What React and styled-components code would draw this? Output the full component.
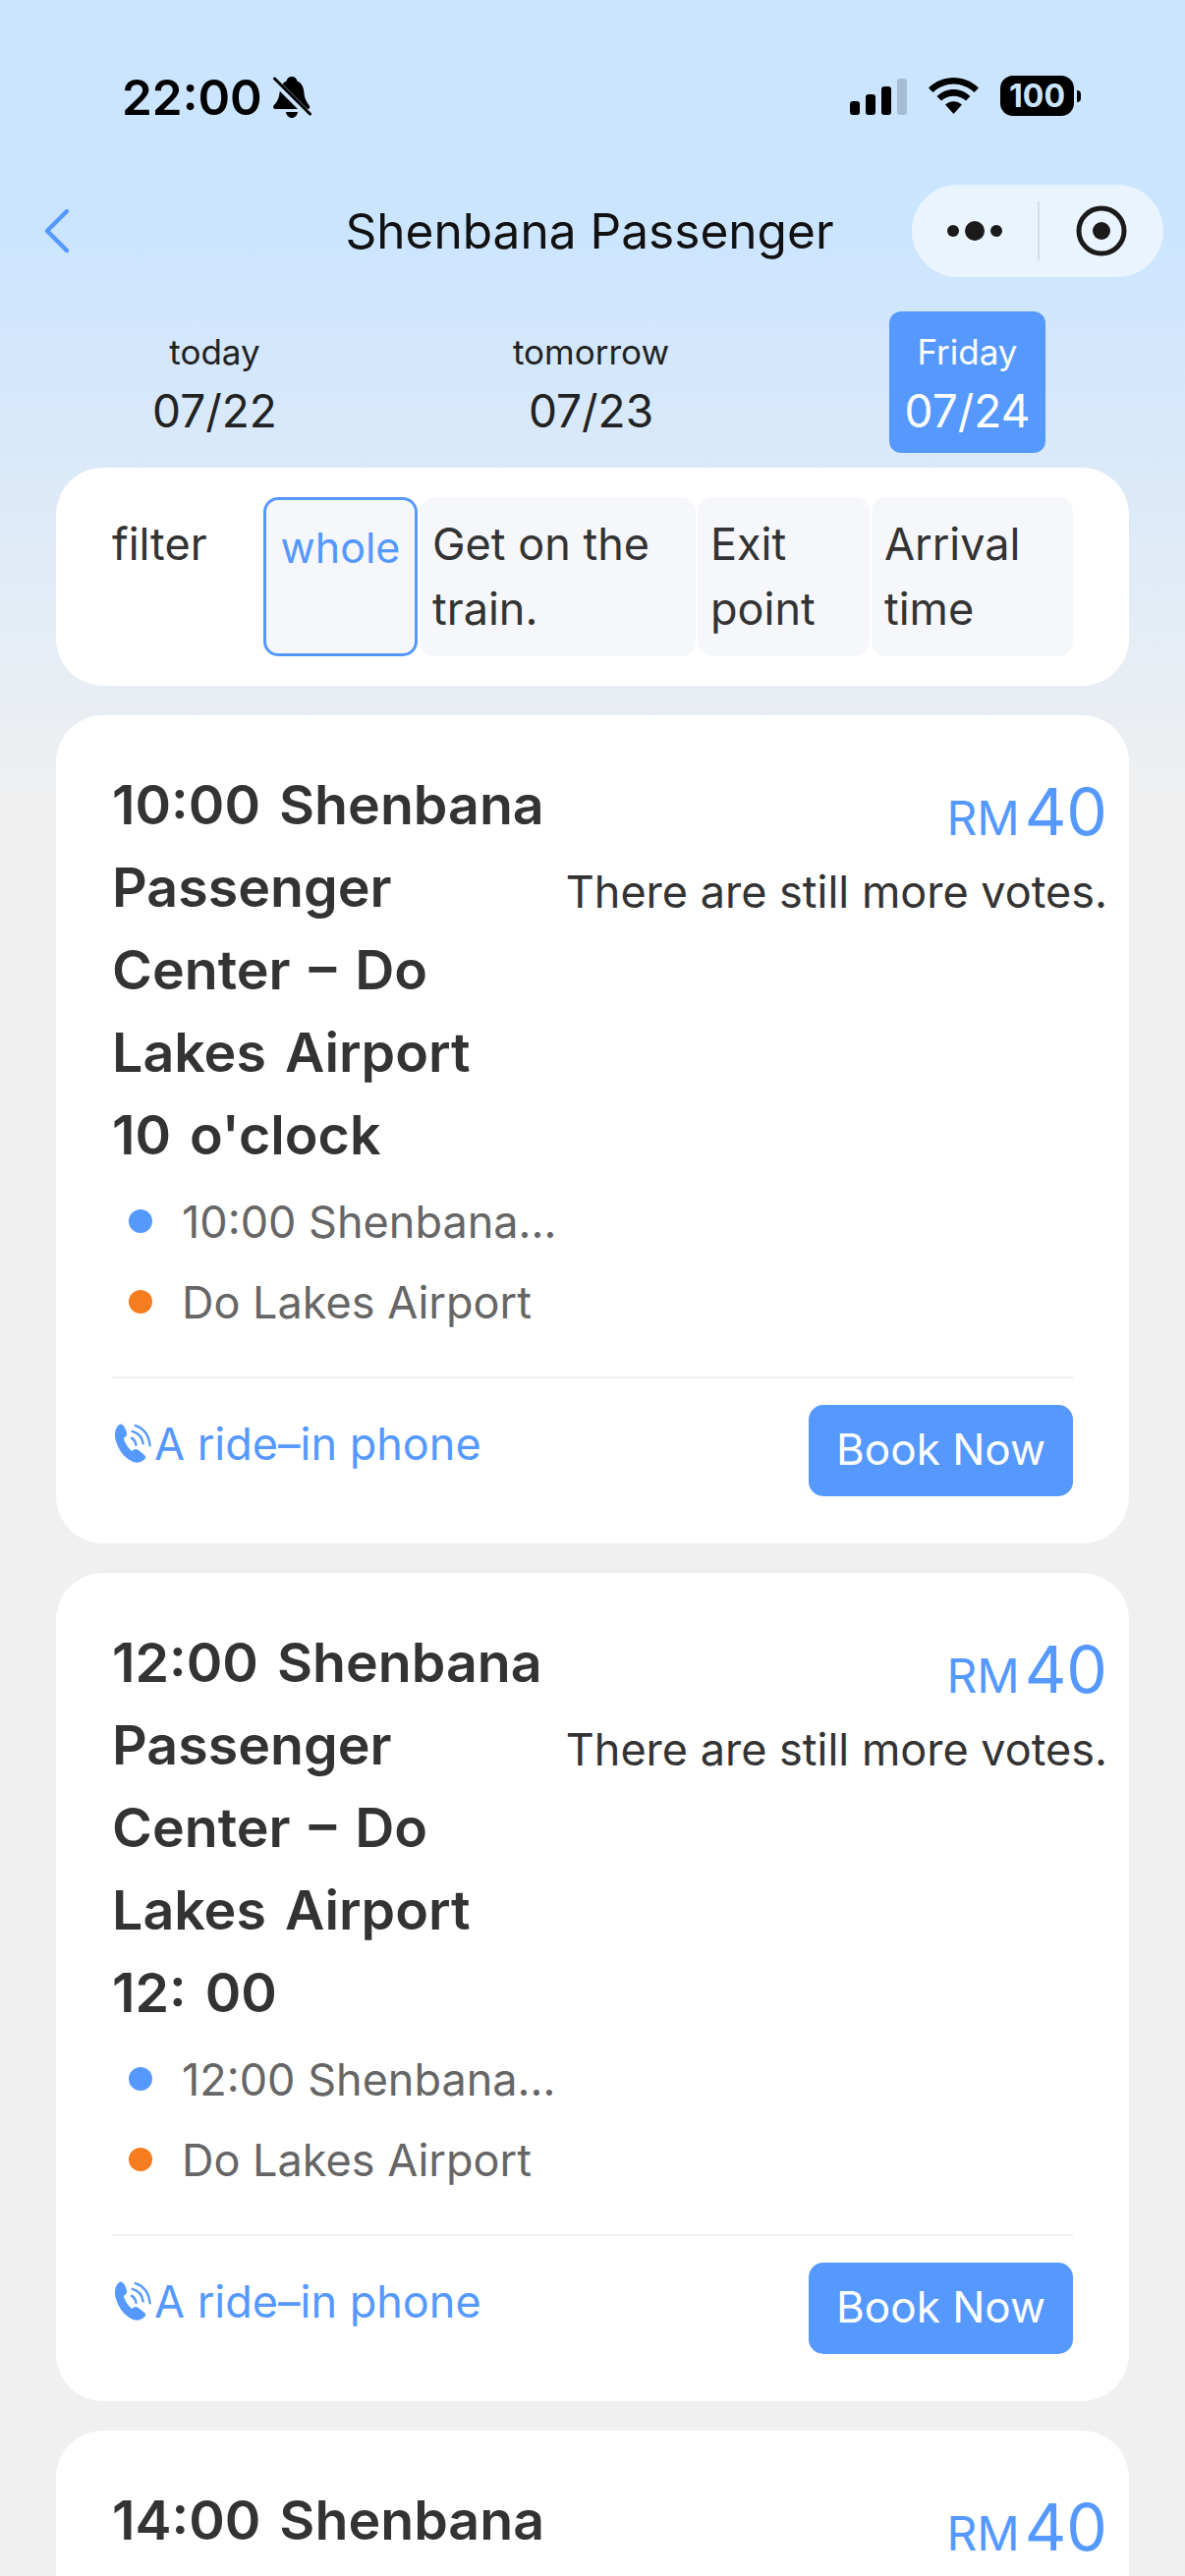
import React from 'react';
import styled, { createGlobalStyle } from 'styled-components';

const Global = createGlobalStyle`
  html, body {
    margin: 0;
    padding: 0;
    background: #f0f0f0;
  }
  * { box-sizing: border-box; }
`;

const Page = styled.div`
  width: 1206px;
  height: 2622px;
  overflow: hidden;
  font-family: Inter, "Noto Sans CJK SC", sans-serif;
  color: #333;
  background: linear-gradient(#cce5ff 240px, #f0f0f0 830px);
`;

const StatusBar = styled.div`
  height: 188px;
  padding: 77px 106px 0 124px;
  display: flex;
  justify-content: space-between;
  align-items: flex-start;
`;
const TimeGroup = styled.div`
  display: flex;
  align-items: center;
  gap: 10px;
`;
const Time = styled.span`
  font-size: 49.500px;
  font-weight: 600;
  line-height: 41px;
  color: #000;
`;
const StatusIcons = styled.div`
  display: flex;
  align-items: center;
  gap: 0;
`;
const Signal = styled.div`
  display: flex;
  align-items: flex-end;
  gap: 6px;
  height: 37px;
  margin: 2px 22px 0 0;
`;
const Bar = styled.i`
  display: block;
  width: 10px;
  height: ${(p) => p.$h}px;
  border-radius: 3px;
  background: ${(p) => p.$off ? '#a6bcd3' : '#000'};
`;
const Battery = styled.div`
  width: 75px;
  height: 41px;
  margin-left: 22px;
  border-radius: 13px;
  background: #000;
  color: #cce5ff;
  font-size: 32px;
  font-weight: 700;
  line-height: 41px;
  text-align: center;
`;
const BatteryCap = styled.i`
  display: block;
  width: 4px;
  height: 12px;
  margin-left: 3px;
  border-radius: 0 4px 4px 0;
  background: #000;
`;

const NavBar = styled.div`
  height: 94px;
  margin-bottom: 35px;
  padding: 0 22px 0 16px;
  display: grid;
  grid-template-columns: 1fr auto 1fr;
  align-items: center;
`;
const BackButton = styled.div`
  display: flex;
  padding-left: 29px;
`;
const NavTitle = styled.div`
  font-size: 49.600px;
  color: #111;
  white-space: nowrap;
`;
const Capsule = styled.div`
  justify-self: end;
  width: 256px;
  height: 94px;
  border-radius: 47px;
  background: #eaf4ff;
  display: grid;
  grid-template-columns: 128px 128px;
  align-items: center;
  justify-items: center;
`;
const CapsuleCell = styled.div`
  width: 100%;
  height: 60px;
  display: flex;
  align-items: center;
  justify-content: center;
  border-left: ${(p) => p.$split ? '2px solid #d3dde8' : 'none'};
`;

const DateRow = styled.div`
  height: 144px;
  margin-bottom: 15px;
  padding: 0 27px;
  display: grid;
  grid-template-columns: repeat(3, 383px);
  justify-items: center;
`;
const DateTab = styled.div`
  width: 159px;
  height: 144px;
  border-radius: 12px;
  display: flex;
  flex-direction: column;
  justify-content: center;
  align-items: center;
  background: ${(p) => p.$active ? '#5599ff' : 'transparent'};
  color: ${(p) => p.$active ? '#fff' : '#222'};
`;
const DateLabel = styled.div`
  font-size: 35px;
  line-height: 58px;
`;
const DateValue = styled.div`
  font-size: 46px;
  line-height: 62px;
`;

const Panel = styled.div`
  margin: 0 57px 30px;
  background: #fff;
  border-radius: 48px;
`;
const FilterPanel = styled(Panel)`
  height: 222px;
  padding: 30px 57px;
  display: grid;
  grid-template-columns: 152px 157px 281px 175px 205px;
  column-gap: 2px;
  font-size: 45px;
  line-height: 66px;
`;
const FilterLabel = styled.div`
  padding-top: 15px;
`;
const Chip = styled.div`
  height: 162px;
  padding: 15px 13px;
  border-radius: 15px;
  background: #f5f7fa;
  border: ${(p) => p.$active ? '3px solid #5599ff' : 'none'};
  color: ${(p) => p.$active ? '#5599ff' : '#333'};
  font-size: ${(p) => p.$active ? 43 : 45}px;
  text-align: ${(p) => p.$active ? 'center' : 'left'};
`;

const TripCard = styled(Panel)`
  height: 843px;
  padding: 50px 57px 48px;
`;
const TripTop = styled.div`
  display: flex;
  margin-right: -35px;
`;
const TripMain = styled.div`
  flex: 1;
  min-width: 0;
`;
const TripTitle = styled.div`
  font-size: 55.500px;
  font-weight: 600;
  line-height: 84px;
  word-spacing: 5px;
  color: #333;
  margin: -1px 0 5px;
`;
const RouteRow = styled.div`
  height: 82px;
  display: flex;
  align-items: center;
`;
const RouteDot = styled.i`
  flex: none;
  width: 24px;
  height: 24px;
  margin: 0 30px 0 17px;
  border-radius: 50%;
  background: ${(p) => p.$color};
`;
const RouteText = styled.span`
  min-width: 0;
  max-width: 385px;
  font-size: 45px;
  color: #666;
  white-space: nowrap;
  overflow: hidden;
  text-overflow: ellipsis;
`;
const TripSide = styled.div`
  flex: none;
  text-align: right;
`;
const Price = styled.div`
  height: 99px;
  padding-top: 6px;
  display: flex;
  justify-content: flex-end;
  align-items: baseline;
  gap: 5px;
  color: #5599ff;
  font-size: 48px;
  line-height: 84px;
`;
const PriceValue = styled.span`
  font-size: 66px;
`;
const Seats = styled.div`
  font-size: 45px;
  line-height: 62px;
  color: #333;
`;
const Divider = styled.div`
  height: 2px;
  margin: 35px 0 27px;
  background: #f0f0f0;
`;
const TripFooter = styled.div`
  display: flex;
  justify-content: space-between;
  align-items: flex-start;
`;
const PhoneLink = styled.div`
  display: flex;
  align-items: center;
  gap: 2px;
  height: 78px;
  color: #5599ff;
  font-size: 45px;
`;
const BookButton = styled.div`
  width: 269px;
  height: 93px;
  border-radius: 15px;
  background: #5599ff;
  color: #fff;
  font-size: 44px;
  line-height: 91px;
  text-align: center;
`;

const BellOff = () => (
  <svg width="40" height="44" viewBox="0 0 40 44">
    <path d="M20 1c3 0 5 2 5.500 4.500C31 8 32 13 32.500 18c.4 5 2 8 5.500 13 .8 1.500 0 3-2 3H4c-3 0-3.500-2-2.500-3.500C5 27 7 23 7.500 18 8 13 9 8 14.500 5.500 15 3 17 1 20 1z" fill="#000"/>
    <path d="M14 37h12c-.5 3.500-3 6-6 6s-5.500-2.500-6-6z" fill="#000"/>
    <path d="M1 4l37 37" stroke="#cce5ff" strokeWidth="7" fill="none"/>
    <path d="M2.500 3l36 36" stroke="#000" strokeWidth="3" strokeLinecap="round" fill="none"/>
  </svg>
);

const Wifi = () => (
  <svg width="51" height="37" viewBox="0 0 51 37">
    <path d="M0 10.500C14-3.500 37-3.500 51 10.500l-4.500 4.500C34 3.500 17 3.500 4.500 15z" fill="#000"/>
    <path d="M8.500 19C18 9.500 33 9.500 42.500 19l-4.500 4.500c-7-6.500-18-6.500-25 0z" fill="#000"/>
    <path d="M17 27.500c5-4.500 12-4.500 17 0L25.500 37z" fill="#000"/>
  </svg>
);

const Chevron = () => (
  <svg width="25" height="44" viewBox="0 0 25 44">
    <path d="M23 2L3 22l20 20" stroke="#5599ff" strokeWidth="4.500" strokeLinecap="round" strokeLinejoin="round" fill="none"/>
  </svg>
);

const Dots = () => (
  <svg width="66" height="22" viewBox="0 0 66 22">
    <circle cx="11" cy="11" r="6" fill="#1a1a1a"/>
    <circle cx="33" cy="11" r="10" fill="#1a1a1a"/>
    <circle cx="55" cy="11" r="6" fill="#1a1a1a"/>
  </svg>
);

const Target = () => (
  <svg width="52" height="52" viewBox="0 0 52 52">
    <circle cx="26" cy="26" r="23" stroke="#1a1a1a" strokeWidth="5" fill="none"/>
    <circle cx="26" cy="26" r="9" fill="#1a1a1a"/>
  </svg>
);

const PhoneIcon = () => (
  <svg width="41" height="42" viewBox="80 80 115 122" style={{ flex: 'none' }}>
    <path d="M102 84Q112 84 118 100L122 112Q123 120 112 126Q118 148 136 164Q146 156 154 160L174 176Q182 184 170 192Q150 206 128 190Q100 172 88 130Q82 96 102 84Z" fill="#5599ff"/>
    <path d="M136 126Q147 132 149 146M138 106Q166 114 170 142M147 89Q186 102 190 148" stroke="#5599ff" strokeWidth="7" strokeLinecap="round" fill="none"/>
  </svg>
);

const trips = [
  { time: '10:00', end: "10 o'clock" },
  { time: '12:00', end: '12: 00' },
  { time: '14:00', end: '14: 00' },
];

const dates = [
  { label: 'today', value: '07/22' },
  { label: 'tomorrow', value: '07/23' },
  { label: 'Friday', value: '07/24', active: true },
];

const filters = ['whole', 'Get on the train.', 'Exit point', 'Arrival time'];

export default function App() {
  return (
    <Page>
      <Global />
      <StatusBar>
        <TimeGroup>
          <Time>22:00</Time>
          <BellOff />
        </TimeGroup>
        <StatusIcons>
          <Signal>
            <Bar $h={14} />
            <Bar $h={21} />
            <Bar $h={29} />
            <Bar $h={37} $off />
          </Signal>
          <Wifi />
          <Battery>100</Battery>
          <BatteryCap />
        </StatusIcons>
      </StatusBar>

      <NavBar>
        <BackButton><Chevron /></BackButton>
        <NavTitle>Shenbana Passenger</NavTitle>
        <Capsule>
          <CapsuleCell><Dots /></CapsuleCell>
          <CapsuleCell $split><Target /></CapsuleCell>
        </Capsule>
      </NavBar>

      <DateRow>
        {dates.map((d) => (
          <DateTab key={d.value} $active={d.active}>
            <DateLabel>{d.label}</DateLabel>
            <DateValue>{d.value}</DateValue>
          </DateTab>
        ))}
      </DateRow>

      <FilterPanel>
        <FilterLabel>filter</FilterLabel>
        {filters.map((f, i) => (
          <Chip key={f} $active={i === 0}>{f}</Chip>
        ))}
      </FilterPanel>

      {trips.map((t) => (
        <TripCard key={t.time}>
          <TripTop>
            <TripMain>
              <TripTitle>
                {t.time} Shenbana Passenger Center – Do Lakes Airport<br />{t.end}
              </TripTitle>
              <RouteRow>
                <RouteDot $color="#5599ff" />
                <RouteText>{t.time} Shenbana Passenger Center</RouteText>
              </RouteRow>
              <RouteRow>
                <RouteDot $color="#f57c1f" />
                <RouteText>Do Lakes Airport</RouteText>
              </RouteRow>
            </TripMain>
            <TripSide>
              <Price>RM<PriceValue>40</PriceValue></Price>
              <Seats>There are still more votes.</Seats>
            </TripSide>
          </TripTop>
          <Divider />
          <TripFooter>
            <PhoneLink><PhoneIcon />A ride–in phone</PhoneLink>
            <BookButton>Book Now</BookButton>
          </TripFooter>
        </TripCard>
      ))}
    </Page>
  );
}
